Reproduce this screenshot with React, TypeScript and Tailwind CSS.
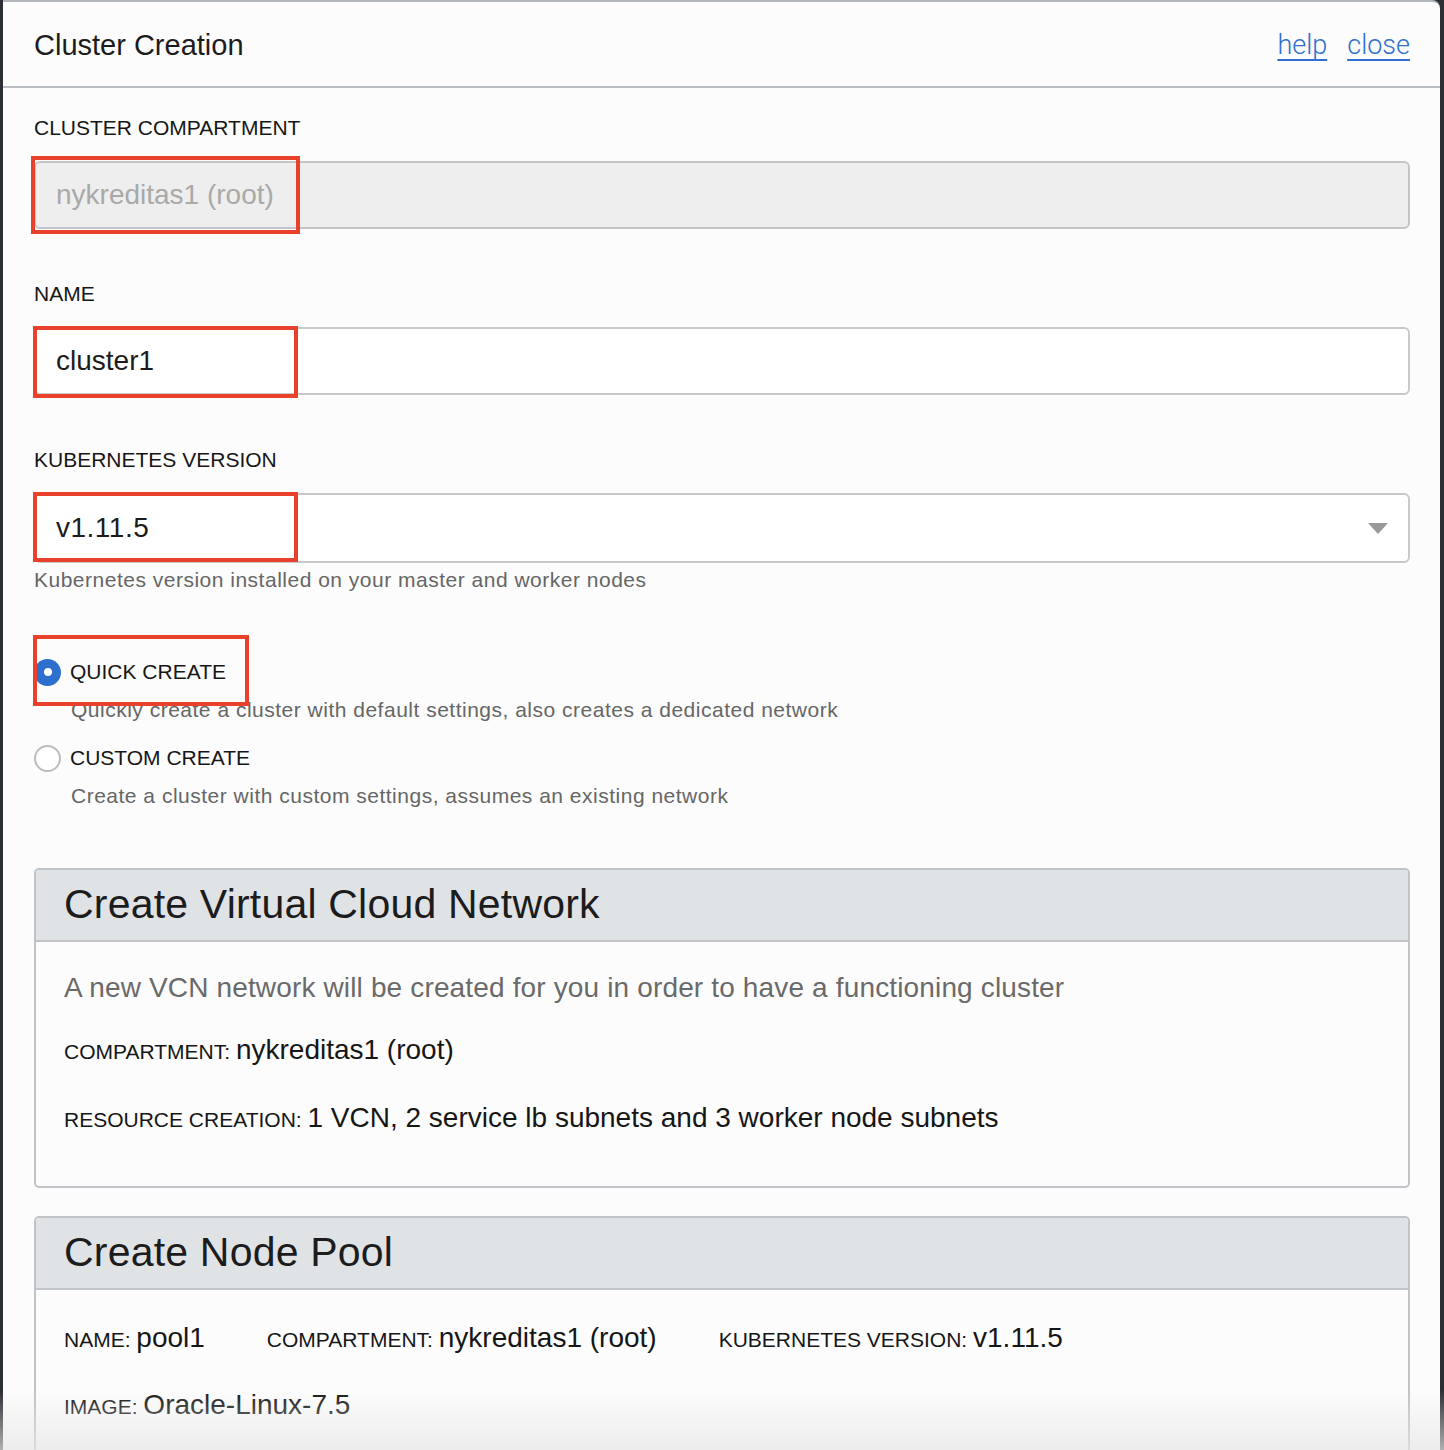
import React from "react";

const font = { fontFamily: '"Liberation Sans", Arial, Helvetica, sans-serif' };

function RedBox({ className }: { className: string }) {
  return <div className={`pointer-events-none absolute border-[4px] border-[#e9412b] ${className}`} />;
}

function Label({ children }: { children: React.ReactNode }) {
  return <div className="text-[21px] leading-[24px] text-[#161616]">{children}</div>;
}

export default function App() {
  return (
    <div style={font} className="relative w-[1444px] h-[1450px] overflow-hidden bg-[#2c2f33]">
      <div className="ml-[3px] mr-[4px] h-[1450px] bg-[#fcfcfc] border-t-2 border-[#b3b6ba] rounded-tr-[8px] overflow-hidden">
        {/* header */}
        <div className="h-[86px] flex items-center justify-between pl-[31px] pr-[30px] border-b-2 border-[#babdc1]">
          <div className="text-[29px] text-[#1c1c1c] mt-[3px]">Cluster Creation</div>
          <div
            className="flex gap-[20px] text-[27px] font-light text-[#2f6fd0] mt-[3px]"
            style={{ fontFamily: 'Roboto, "Liberation Sans", sans-serif' }}
          >
            <a className="underline underline-offset-[5px] decoration-[2px] cursor-pointer">help</a>
            <a className="underline underline-offset-[5px] decoration-[2px] cursor-pointer">close</a>
          </div>
        </div>

        <div className="pl-[31px] pr-[30px] pt-[28px]">
          <Label>CLUSTER COMPARTMENT</Label>
          <div className="relative mt-[21px]">
            <div className="h-[68px] rounded-[6px] border-2 border-[#c3c6c9] bg-[#eeeeee] flex items-center pl-[20px] text-[28px] text-[#a9a9a9]">
              nykreditas1 (root)
            </div>
            <RedBox className="-left-[3px] -top-[5px] w-[269px] h-[78px]" />
          </div>

          <div className="mt-[53px]">
            <Label>NAME</Label>
          </div>
          <div className="relative mt-[21px]">
            <div className="h-[68px] rounded-[6px] border-2 border-[#c9c9c9] bg-white flex items-center pl-[20px] text-[28px] text-[#1c1c1c]">
              cluster1
            </div>
            <RedBox className="-left-[1px] -top-[1px] w-[265px] h-[72px]" />
          </div>

          <div className="mt-[53px]">
            <Label>KUBERNETES VERSION</Label>
          </div>
          <div className="relative mt-[21px]">
            <div className="h-[70px] rounded-[6px] border-2 border-[#c9c9c9] bg-white flex items-center justify-between pl-[20px] pr-[20px] text-[28px] text-[#1c1c1c]">
              <span className="tracking-[0.5px]">v1.11.5</span>
              <svg width="20" height="11" viewBox="0 0 20 11">
                <polygon points="0,0 20,0 10,11" fill="#999999" />
              </svg>
            </div>
            <RedBox className="-left-[1px] -top-[1px] w-[265px] h-[70px]" />
          </div>
          <div className="mt-[5px] text-[21px] leading-[24px] tracking-[0.5px] text-[#666666]">
            Kubernetes version installed on your master and worker nodes
          </div>

          {/* radios */}
          <div className="relative mt-[66px]">
            <div className="flex items-center h-[28px]">
              <div className="w-[27px] h-[27px] rounded-full bg-[#2d6fcc] flex items-center justify-center">
                <div className="w-[8px] h-[8px] rounded-full bg-white" />
              </div>
              <span className="ml-[9px] text-[21px] text-[#161616]">QUICK CREATE</span>
            </div>
            <RedBox className="-left-[1px] -top-[23px] w-[216px] h-[71px]" />
          </div>
          <div className="mt-[12px] pl-[37px] text-[21px] leading-[24px] tracking-[0.5px] text-[#666666]">
            Quickly create a cluster with default settings, also creates a dedicated network
          </div>
          <div className="mt-[22px] flex items-center h-[28px]">
            <div className="w-[27px] h-[27px] rounded-full border-2 border-[#b9bcbf] bg-white" />
            <span className="ml-[9px] text-[21px] text-[#161616]">CUSTOM CREATE</span>
          </div>
          <div className="mt-[12px] pl-[37px] text-[21px] leading-[24px] tracking-[0.5px] text-[#666666]">
            Create a cluster with custom settings, assumes an existing network
          </div>

          {/* card 1 */}
          <div className="mt-[60px] h-[320px] rounded-[5px] border-2 border-[#c0c3c7] bg-[#fcfcfc] overflow-hidden">
            <div className="h-[72px] bg-[#e0e3e6] border-b-2 border-[#c0c3c7] flex items-center pl-[28px]">
              <span className="text-[41px] text-[#1c1c1c] tracking-[0.2px]">Create Virtual Cloud Network</span>
            </div>
            <div className="pl-[28px] pt-[30px]">
              <div className="text-[28px] leading-[32px] tracking-[0.15px] text-[#6a6a6a]">
                A new VCN network will be created for you in order to have a functioning cluster
              </div>
              <div className="mt-[30px] leading-[32px] text-[#161616]">
                <span className="text-[21px]">COMPARTMENT: </span>
                <span className="text-[28px]">nykreditas1 (root)</span>
              </div>
              <div className="mt-[32px] leading-[32px] text-[#161616]">
                <span className="text-[21px]">RESOURCE CREATION: </span>
                <span className="text-[28px]">1 VCN, 2 service lb subnets and 3 worker node subnets</span>
              </div>
            </div>
          </div>

          {/* card 2 */}
          <div className="mt-[28px] h-[320px] rounded-[5px] border-2 border-[#c0c3c7] bg-[#fcfcfc] overflow-hidden">
            <div className="h-[72px] bg-[#e0e3e6] border-b-2 border-[#c0c3c7] flex items-center pl-[28px]">
              <span className="text-[41px] text-[#1c1c1c] tracking-[0.2px]">Create Node Pool</span>
            </div>
            <div className="pl-[28px] pt-[32px]">
              <div className="flex gap-[62px] leading-[32px] text-[#161616]">
                <div>
                  <span className="text-[21px]">NAME: </span>
                  <span className="text-[28px]">pool1</span>
                </div>
                <div>
                  <span className="text-[21px]">COMPARTMENT: </span>
                  <span className="text-[28px]">nykreditas1 (root)</span>
                </div>
                <div>
                  <span className="text-[21px]">KUBERNETES VERSION: </span>
                  <span className="text-[28px]">v1.11.5</span>
                </div>
              </div>
              <div className="mt-[31px] leading-[32px] text-[#161616]">
                <span className="text-[21px]">IMAGE: </span>
                <span className="text-[28px]">Oracle-Linux-7.5</span>
              </div>
            </div>
          </div>
        </div>
      </div>
      {/* bottom fade */}
      <div className="pointer-events-none absolute left-0 right-0 bottom-0 h-[60px] bg-gradient-to-b from-transparent to-[#e6e6e6]/70" />
    </div>
  );
}
